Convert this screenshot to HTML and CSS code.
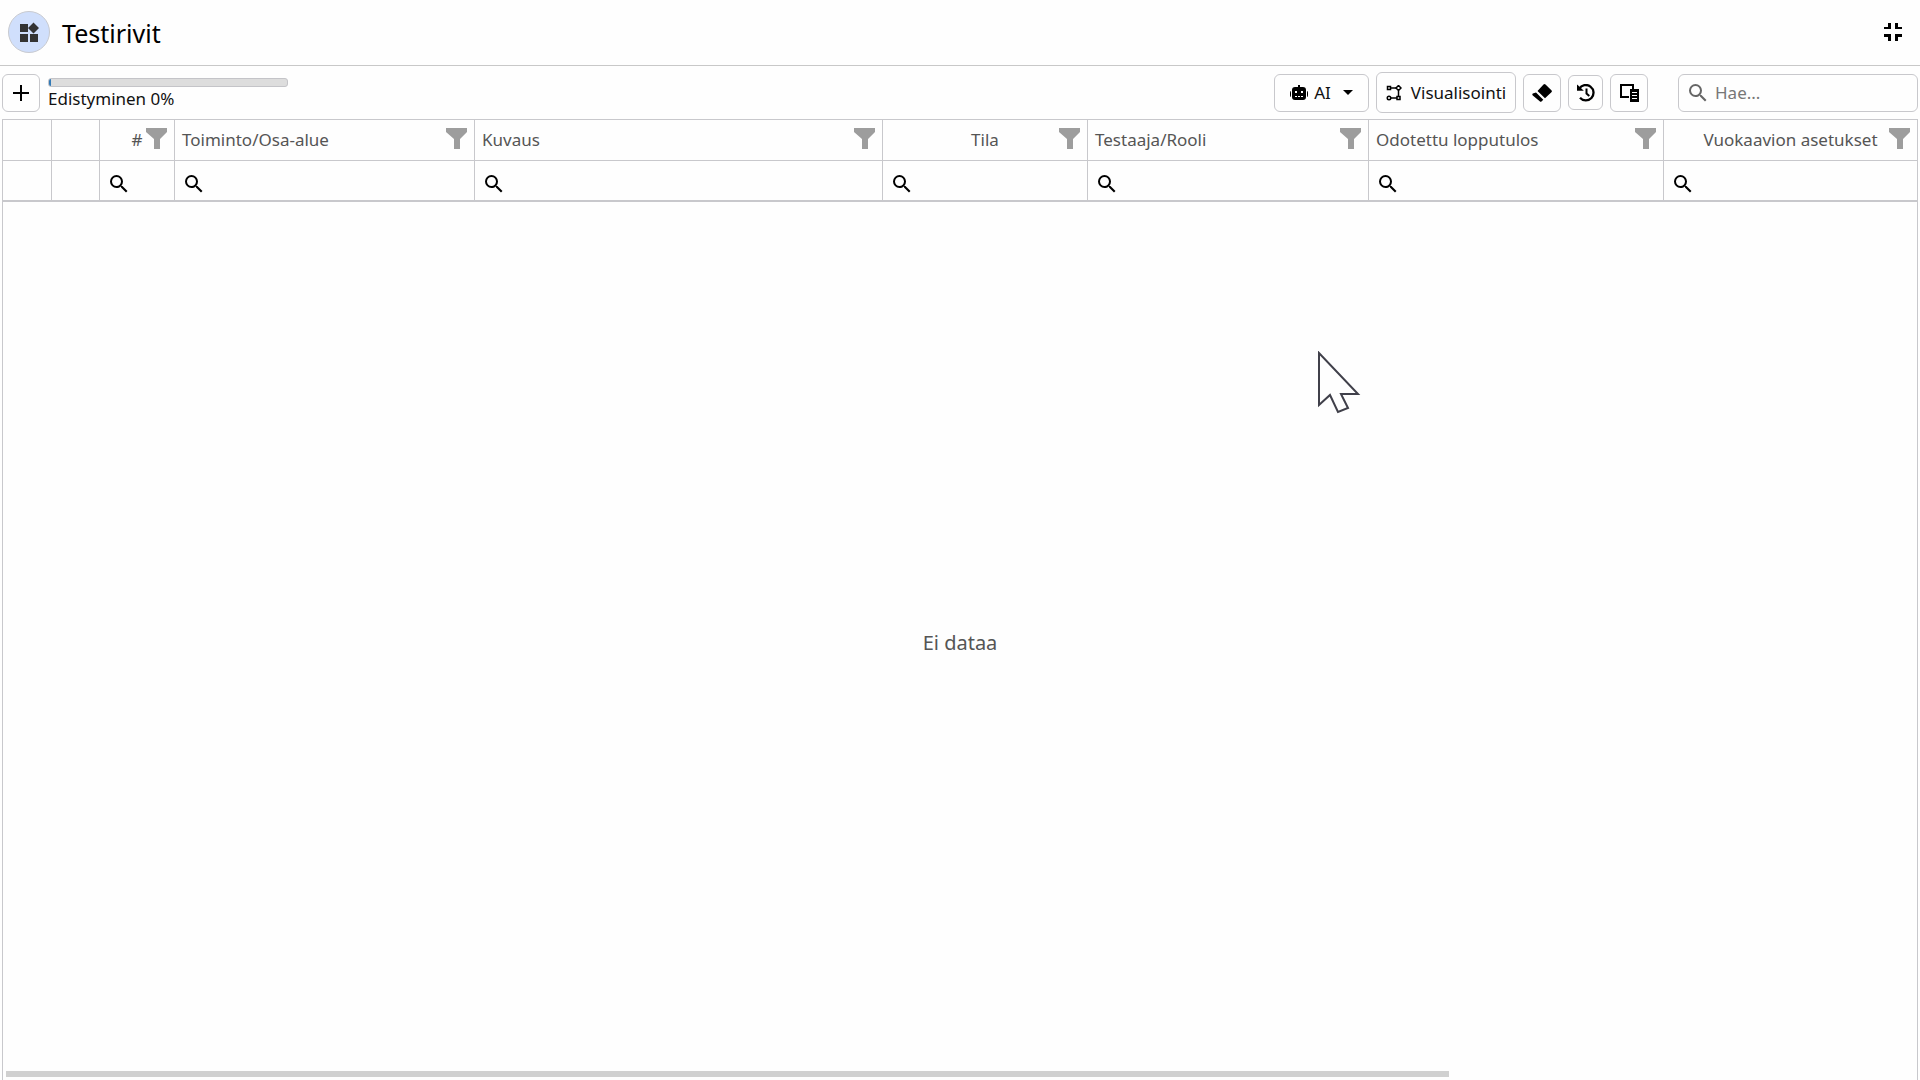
FILE: index.html
```html
<!DOCTYPE html>
<html lang="fi">
<head>
  <meta charset="UTF-8">
  <meta name="viewport" content="width=device-width, initial-scale=1">
  <title>Testirivit</title>
  <link rel="stylesheet" href="styles.css">
</head>
<body>

<!-- shared icons -->
<svg class="icon-defs" aria-hidden="true">
  <symbol id="icon-search" viewBox="3 3 18 18">
    <path d="M15.5 14h-.79l-.28-.27A6.47 6.47 0 0 0 16 9.5 6.5 6.5 0 1 0 9.5 16c1.61 0 3.09-.59 4.23-1.57l.27.28v.79l5 4.99L20.49 19l-4.99-5zm-6 0C7.01 14 5 11.99 5 9.5S7.01 5 9.5 5 14 7.01 14 9.5 11.99 14 9.5 14z"/>
  </symbol>
  <symbol id="icon-filter" viewBox="0 0 21 21">
    <path d="M0 0h21v4l-7 7v10H8V11L0 4z"/>
  </symbol>
</svg>

<header class="page-header">
  <span class="app-icon">
    <svg viewBox="0 0 20 20" width="20" height="20"><path d="M1 2h8v8H1zM1 12h8v8H1zM11 12h8v8h-8zM14.5 .5L20 6l-5.500 5.500L9 6z"/></svg>
  </span>
  <h1 class="page-title">Testirivit</h1>
  <button class="icon-button" aria-label="Pienennä">
    <svg viewBox="0 0 18 18" width="18" height="18"><path d="M4 0h3v6H0V4h4zM11 0h3v4h4v2h-7zM0 11h7v7H4v-4H0zM11 11h7v3h-4v4h-3z"/></svg>
  </button>
</header>

<div class="toolbar">
  <button class="tool-button" aria-label="Lisää">
    <svg viewBox="0 0 18 18" width="18" height="18"><path d="M8 1h2v7h7v2h-7v7H8v-7H1V8h7z"/></svg>
  </button>
  <div class="progress">
    <div class="progress-track"><div class="progress-bar"></div></div>
    <div class="progress-label">Edistyminen 0%</div>
  </div>

  <div class="toolbar-actions">
    <button class="tool-button ai-button">
      <svg viewBox="0 0 18 16" width="18" height="16">
        <path fill-rule="evenodd" d="M8 0h2v2h3q3 0 3 3v7q0 3-3 3H5q-3 0-3-3V5q0-3 3-3h3zM5 6v2h2V6zM11 6v2h2V6zM5 11v1h2v-1zM8 11v1h2v-1zM11 11v1h2v-1zM1 6v6q-1 0-1-2V8q0-2 1-2zM17 6v6q1 0 1-2V8q0-2-1-2z"/>
      </svg>
      <span>AI</span>
      <svg class="caret" viewBox="0 0 10 5" width="10" height="5"><path d="M0 0h10L5 5z"/></svg>
    </button>
    <button class="tool-button visual-button">
      <svg viewBox="0 0 16 16" width="16" height="16" fill="none" stroke="#000" stroke-width="1.500">
        <path d="M1.500 1.500h3v3h-3zM4.500 3H10M12.500 5.500v6M11 13H5"/>
        <path d="M12.500 .5L15 3l-2.500 2.500L10 3zM11 11.500h3v3h-3z"/>
        <circle cx="3" cy="13" r="1.750"/>
      </svg>
      <span>Visualisointi</span>
    </button>
    <button class="tool-button" aria-label="Tyhjennä suodattimet">
      <svg viewBox="0 0 20 18" width="20" height="18"><path d="M11.500 .6q1-1 2 0l5.900 5.600q1 1 0 2L13 14.300 5.500 7zM4 8.400l7.300 7.300-1.600 1.600q-1 1-2 0L.8 11.500q-1-1 0-2z"/></svg>
    </button>
    <button class="tool-button small-button" aria-label="Historia">
      <svg viewBox="0 0 18 18" width="18" height="18">
        <path fill="none" stroke="#000" stroke-width="2.300" d="M2.200 4.800A7.700 7.700 0 1 1 3 13.800"/>
        <path d="M0 .5l1.500 1.200L6.800 6.800H0z"/>
        <path fill="none" stroke="#000" stroke-width="2" d="M9.500 4.500v5l2.800 2.500"/>
      </svg>
    </button>
    <button class="tool-button" aria-label="Sarakkeet">
      <svg viewBox="0 0 19 18" width="19" height="18">
        <path fill="none" stroke="#000" stroke-width="2" d="M9 13H1V1h12v4"/>
        <path fill-rule="evenodd" d="M10 5h9v13h-9zM12 8v1h5V8zM12 11v1h5v-1zM12 14v1h5v-1z"/>
      </svg>
    </button>
  </div>

  <label class="search-box">
    <svg class="search-icon"><use href="#icon-search"/></svg>
    <input type="text" placeholder="Hae..." aria-label="Hae">
  </label>
</div>

<main class="grid">
  <table class="grid-table">
    <colgroup>
      <col class="col-select"><col class="col-command"><col class="col-number"><col class="col-feature"><col class="col-description"><col class="col-status"><col class="col-tester"><col class="col-expected"><col>
    </colgroup>
    <thead>
      <tr>
        <th></th>
        <th></th>
        <th><div class="head-cell centered"><span>#</span><svg class="filter-icon"><use href="#icon-filter"/></svg></div></th>
        <th><div class="head-cell"><span>Toiminto/Osa-alue</span><svg class="filter-icon"><use href="#icon-filter"/></svg></div></th>
        <th><div class="head-cell"><span>Kuvaus</span><svg class="filter-icon"><use href="#icon-filter"/></svg></div></th>
        <th><div class="head-cell centered"><span>Tila</span><svg class="filter-icon"><use href="#icon-filter"/></svg></div></th>
        <th><div class="head-cell"><span>Testaaja/Rooli</span><svg class="filter-icon"><use href="#icon-filter"/></svg></div></th>
        <th><div class="head-cell"><span>Odotettu lopputulos</span><svg class="filter-icon"><use href="#icon-filter"/></svg></div></th>
        <th><div class="head-cell centered"><span>Vuokaavion asetukset</span><svg class="filter-icon"><use href="#icon-filter"/></svg></div></th>
      </tr>
      <tr class="filter-row">
        <td></td>
        <td></td>
        <td><label class="filter-cell"><svg class="search-icon"><use href="#icon-search"/></svg><input type="text" aria-label="Suodata #"></label></td>
        <td><label class="filter-cell"><svg class="search-icon"><use href="#icon-search"/></svg><input type="text" aria-label="Suodata Toiminto/Osa-alue"></label></td>
        <td><label class="filter-cell"><svg class="search-icon"><use href="#icon-search"/></svg><input type="text" aria-label="Suodata Kuvaus"></label></td>
        <td><label class="filter-cell"><svg class="search-icon"><use href="#icon-search"/></svg><input type="text" aria-label="Suodata Tila"></label></td>
        <td><label class="filter-cell"><svg class="search-icon"><use href="#icon-search"/></svg><input type="text" aria-label="Suodata Testaaja/Rooli"></label></td>
        <td><label class="filter-cell"><svg class="search-icon"><use href="#icon-search"/></svg><input type="text" aria-label="Suodata Odotettu lopputulos"></label></td>
        <td><label class="filter-cell"><svg class="search-icon"><use href="#icon-search"/></svg><input type="text" aria-label="Suodata Vuokaavion asetukset"></label></td>
      </tr>
    </thead>
  </table>
  <div class="grid-body">
    <span class="no-data">Ei dataa</span>
    <div class="scrollbar"></div>
  </div>
</main>

<svg class="cursor" viewBox="0 0 44 64" width="44" height="64">
  <path d="M2 2v52l11-10 8 17 10-4-7-14h17z"/>
</svg>

</body>
</html>
```
FILE: styles.css
```css
* {
  box-sizing: border-box;
}

body {
  font-family: "Noto Sans", sans-serif;
  font-size: 17px;
  background: #fefefe;
  color: #111;
  margin: 0;
  min-height: 100vh;
  display: flex;
  flex-direction: column;
}

button,
input {
  font: inherit;
  color: inherit;
}

svg {
  display: block;
  flex: none;
}

.icon-defs {
  position: absolute;
  width: 0;
  height: 0;
}

.page-header {
  display: flex;
  align-items: center;
  height: 66px;
  padding: 0 18px 2px 8px;
  border-bottom: 1px solid #c8c8c8;
}

.app-icon {
  display: flex;
  align-items: center;
  justify-content: center;
  width: 42px;
  height: 42px;
  border: 1px solid #c8cad0;
  border-radius: 50%;
  background: #d0dffc;
  fill: #333;
}

.page-title {
  flex: 1;
  margin: 0 0 0 12px;
  padding-top: 2px;
  font-size: 25px;
  font-weight: 400;
  line-height: 36px;
  color: #000;
}

.icon-button {
  padding: 0;
  border: 0;
  background: none;
}

.toolbar {
  display: flex;
  align-items: center;
  height: 53px;
  padding: 0 2px;
}

.tool-button {
  display: flex;
  align-items: center;
  justify-content: center;
  width: 38px;
  height: 38px;
  padding: 0;
  border: 1px solid #c8c8cc;
  border-radius: 6px;
  background: #fefefe;
}

.progress {
  width: 240px;
  margin-left: 8px;
  padding-top: 4px;
}

.progress-track {
  height: 9px;
  border: 1px solid #c4c4c8;
  border-radius: 3px;
  background: #dddddd;
  overflow: hidden;
}

.progress-bar {
  width: 2px;
  height: 100%;
  background: #337ab7;
}

.progress-label {
  line-height: 24px;
}

.toolbar-actions {
  display: flex;
  align-items: center;
  gap: 7px;
  margin-left: auto;
}

.ai-button {
  width: 95px;
  gap: 6px;
}

.caret {
  margin-left: 6px;
}

.visual-button {
  width: 140px;
  height: 41px;
  gap: 9px;
}

.small-button {
  width: 35px;
  height: 35px;
}

.search-box {
  display: flex;
  align-items: center;
  gap: 8px;
  width: 240px;
  height: 38px;
  margin-left: 30px;
  padding: 0 10px;
  border: 1px solid #c8c8cc;
  border-radius: 6px;
  fill: #666;
}

.search-box input,
.filter-cell input {
  flex: 1;
  min-width: 0;
  padding: 0;
  border: 0;
  outline: 0;
  background: none;
}

.search-box input::placeholder {
  color: #777;
}

.search-icon {
  width: 18px;
  height: 18px;
}

.grid {
  flex: 1;
  display: flex;
  flex-direction: column;
  margin: 0 2px;
  border: 1px solid #c8c8cc;
  border-bottom: 0;
}

.grid-table {
  width: 100%;
  table-layout: fixed;
  border-spacing: 0;
}

.col-select { width: 49px; }
.col-command { width: 48px; }
.col-number { width: 75px; }
.col-feature { width: 300px; }
.col-description { width: 408px; }
.col-status { width: 205px; }
.col-tester { width: 281px; }
.col-expected { width: 295px; }

.grid-table th,
.grid-table td {
  height: 41px;
  padding: 0 7px;
  border-right: 1px solid #c8c8cc;
  border-bottom: 1px solid #c8c8cc;
}

.grid-table th:last-child,
.grid-table td:last-child {
  border-right: 0;
}

.grid-table .filter-row td {
  border-bottom: 2px solid #c8c8cc;
}

.head-cell {
  display: flex;
  justify-content: space-between;
  font-weight: 400;
  line-height: 24px;
  color: #555;
}

.centered span {
  flex: 1;
  padding-left: 21px;
  text-align: center;
}

.filter-icon {
  width: 21px;
  height: 21px;
  fill: #9d9d9d;
}

.filter-cell {
  display: flex;
  align-items: center;
  padding: 6px 0 0 3px;
}

.grid-body {
  position: relative;
  flex: 1;
  display: flex;
  align-items: center;
  justify-content: center;
}

.no-data {
  padding-top: 3px;
  font-size: 20px;
  line-height: 28px;
  color: #555;
}

.scrollbar {
  position: absolute;
  left: 3px;
  bottom: 3px;
  width: 75.4%;
  height: 6px;
  background: #d0d0d0;
}

.cursor {
  position: absolute;
  left: 1317px;
  top: 351px;
  fill: #fefefe;
  stroke: #40404a;
  stroke-width: 2;
}
```
